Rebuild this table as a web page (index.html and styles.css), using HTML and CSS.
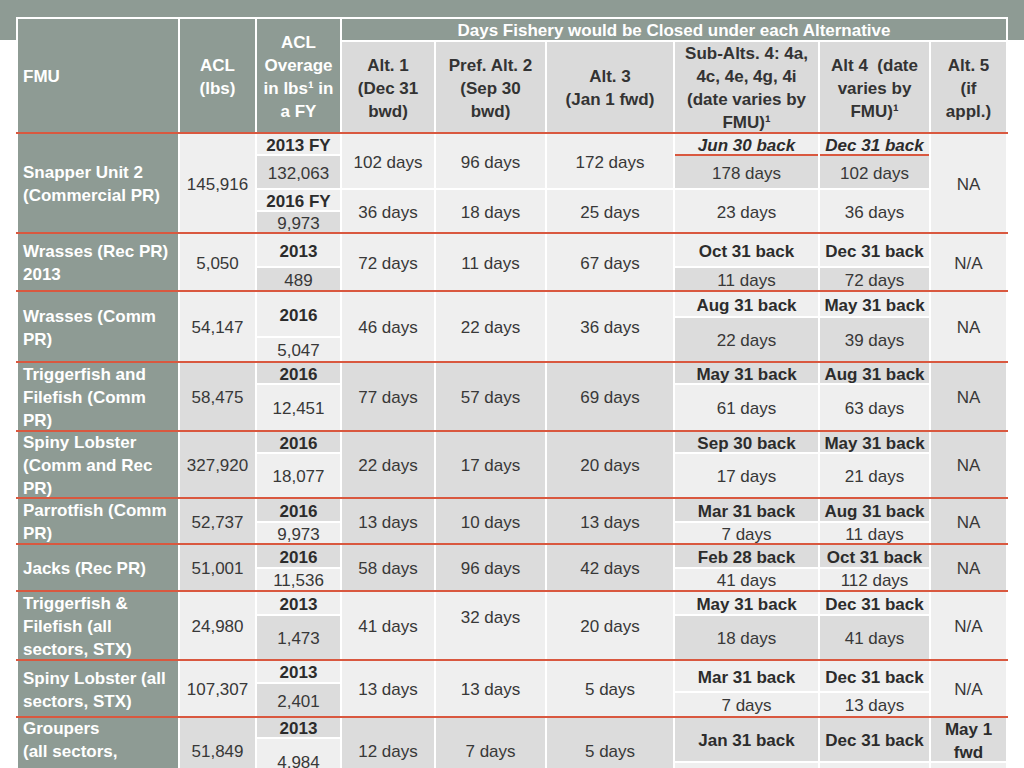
FILE: index.html
```html
<!DOCTYPE html>
<html>
<head>
<meta charset="utf-8">
<link rel="stylesheet" href="styles.css">
</head>
<body>
<div class="sheet">
  <div class="grid head">
    <div class="c hd fmu s2">FMU</div>
    <div class="c hd s2">ACL<br>(lbs)</div>
    <div class="c hd s2">ACL<br>Overage<br>in lbs¹ in<br>a FY</div>
    <div class="c hd days">Days Fishery would be Closed under each Alternative</div>
    <div class="c alt">Alt. 1<br>(Dec 31<br>bwd)</div>
    <div class="c alt">Pref. Alt. 2<br>(Sep 30<br>bwd)</div>
    <div class="c alt">Alt. 3<br>(Jan 1 fwd)</div>
    <div class="c alt">Sub-Alts. 4: 4a,<br>4c, 4e, 4g, 4i<br>(date varies by<br>FMU)¹</div>
    <div class="c alt">Alt 4&nbsp; (date<br>varies by<br>FMU)¹</div>
    <div class="c alt">Alt. 5<br>(if<br>appl.)</div>
  </div>

  <div class="grid row r-snapper">
    <div class="c fmu s4">Snapper Unit 2<br>(Commercial PR)</div>
    <div class="c L s4">145,916</div>
    <div class="c L b">2013 FY</div>
    <div class="c L s2">102 days</div>
    <div class="c L s2">96 days</div>
    <div class="c L s2">172 days</div>
    <div class="c L bi redline">Jun 30 back</div>
    <div class="c L bi redline">Dec 31 back</div>
    <div class="c L s4">NA</div>
    <div class="c D">132,063</div>
    <div class="c D">178 days</div>
    <div class="c D">102 days</div>
    <div class="c L b">2016 FY</div>
    <div class="c L s2">36 days</div>
    <div class="c L s2">18 days</div>
    <div class="c L s2">25 days</div>
    <div class="c L s2">23 days</div>
    <div class="c L s2">36 days</div>
    <div class="c D">9,973</div>
  </div>

  <div class="grid row r-wrec">
    <div class="c fmu s2">Wrasses (Rec PR)<br>2013</div>
    <div class="c L s2">5,050</div>
    <div class="c L b">2013</div>
    <div class="c L s2">72 days</div>
    <div class="c L s2">11 days</div>
    <div class="c L s2">67 days</div>
    <div class="c L b">Oct 31 back</div>
    <div class="c L b">Dec 31 back</div>
    <div class="c L s2">N/A</div>
    <div class="c D">489</div>
    <div class="c D">11 days</div>
    <div class="c D">72 days</div>
  </div>

  <div class="grid row r-wcomm">
    <div class="c fmu s3">Wrasses (Comm<br>PR)</div>
    <div class="c L s3">54,147</div>
    <div class="c L b s2">2016</div>
    <div class="c L s3">46 days</div>
    <div class="c L s3">22 days</div>
    <div class="c L s3">36 days</div>
    <div class="c L b">Aug 31 back</div>
    <div class="c L b">May 31 back</div>
    <div class="c L s3">NA</div>
    <div class="c D s2">22 days</div>
    <div class="c D s2">39 days</div>
    <div class="c L">5,047</div>
  </div>

  <div class="grid row r-tcomm">
    <div class="c fmu s2">Triggerfish and<br>Filefish (Comm<br>PR)</div>
    <div class="c D s2">58,475</div>
    <div class="c D b">2016</div>
    <div class="c D s2">77 days</div>
    <div class="c D s2">57 days</div>
    <div class="c D s2">69 days</div>
    <div class="c D b">May 31 back</div>
    <div class="c D b">Aug 31 back</div>
    <div class="c D s2">NA</div>
    <div class="c L">12,451</div>
    <div class="c L">61 days</div>
    <div class="c L">63 days</div>
  </div>

  <div class="grid row r-scomm">
    <div class="c fmu s2">Spiny Lobster<br>(Comm and Rec<br>PR)</div>
    <div class="c D s2">327,920</div>
    <div class="c D b">2016</div>
    <div class="c D s2">22 days</div>
    <div class="c D s2">17 days</div>
    <div class="c D s2">20 days</div>
    <div class="c D b">Sep 30 back</div>
    <div class="c D b">May 31 back</div>
    <div class="c D s2">NA</div>
    <div class="c L">18,077</div>
    <div class="c L">17 days</div>
    <div class="c L">21 days</div>
  </div>

  <div class="grid row r-parrot">
    <div class="c fmu s2">Parrotfish (Comm<br>PR)</div>
    <div class="c D s2">52,737</div>
    <div class="c D b">2016</div>
    <div class="c D s2">13 days</div>
    <div class="c D s2">10 days</div>
    <div class="c D s2">13 days</div>
    <div class="c D b">Mar 31 back</div>
    <div class="c D b">Aug 31 back</div>
    <div class="c D s2">NA</div>
    <div class="c L">9,973</div>
    <div class="c L">7 days</div>
    <div class="c L">11 days</div>
  </div>

  <div class="grid row r-jacks">
    <div class="c fmu s2">Jacks (Rec PR)</div>
    <div class="c D s2">51,001</div>
    <div class="c D b">2016</div>
    <div class="c D s2">58 days</div>
    <div class="c D s2">96 days</div>
    <div class="c D s2">42 days</div>
    <div class="c D b">Feb 28 back</div>
    <div class="c D b">Oct 31 back</div>
    <div class="c D s2">NA</div>
    <div class="c L">11,536</div>
    <div class="c L">41 days</div>
    <div class="c L">112 days</div>
  </div>

  <div class="grid row r-tstx">
    <div class="c fmu s2">Triggerfish &amp;<br>Filefish (all<br>sectors, STX)</div>
    <div class="c L s2">24,980</div>
    <div class="c L b">2013</div>
    <div class="c L s2">41 days</div>
    <div class="c L s2 up">32 days</div>
    <div class="c L s2">20 days</div>
    <div class="c L b">May 31 back</div>
    <div class="c L b">Dec 31 back</div>
    <div class="c L s2">N/A</div>
    <div class="c D">1,473</div>
    <div class="c D">18 days</div>
    <div class="c D">41 days</div>
  </div>

  <div class="grid row r-sstx">
    <div class="c fmu s3">Spiny Lobster (all<br>sectors, STX)</div>
    <div class="c L s3">107,307</div>
    <div class="c L b">2013</div>
    <div class="c L s3">13 days</div>
    <div class="c L s3">13 days</div>
    <div class="c L s3">5 days</div>
    <div class="c L b s2">Mar 31 back</div>
    <div class="c L b s2">Dec 31 back</div>
    <div class="c L s3">N/A</div>
    <div class="c D s2">2,401</div>
    <div class="c L">7 days</div>
    <div class="c L">13 days</div>
  </div>

  <div class="grid row r-grp">
    <div class="c fmu s3">Groupers<br>(all sectors,<br>STX)</div>
    <div class="c D s3">51,849</div>
    <div class="c D b">2013</div>
    <div class="c D s3">12 days</div>
    <div class="c D s3">7 days</div>
    <div class="c D s3">5 days</div>
    <div class="c D b s2">Jan 31 back</div>
    <div class="c D b s2">Dec 31 back</div>
    <div class="c D b s2">May 1<br>fwd</div>
    <div class="c L s2">4,984</div>
    <div class="c L"></div>
    <div class="c L"></div>
    <div class="c L"></div>
  </div>
</div>
</body>
</html>
```

FILE: styles.css
```css
html, body {
  margin: 0;
  padding: 0;
}

body {
  width: 1024px;
  height: 768px;
  overflow: hidden;
  background: linear-gradient(to bottom, #8e9b94 0, #8e9b94 40px, #ffffff 40px);
  font-family: "Liberation Sans", Arial, sans-serif;
  font-size: 17px;
  color: #383838;
}

.sheet {
  margin: 17px 0 0 16px;
  width: 992px;
}

.grid {
  display: grid;
  grid-template-columns: 160px 75px 83px 92px 109px 126px 143px 109px 75px;
  column-gap: 2px;
  row-gap: 2px;
  padding: 0 2px;
  background: #ffffff;
}

.head {
  border-top: 2px solid #ffffff;
  grid-template-rows: 21px 90px;
}

.row {
  border-top: 2px solid #d9583f;
}

.r-snapper { grid-template-rows: 20px 32px 20px 20px; }
.r-wrec    { grid-template-rows: 32px 22px; }
.r-wcomm   { grid-template-rows: 24px 18px 23px; }
.r-tcomm   { grid-template-rows: 20px 45px; }
.r-scomm   { grid-template-rows: 20px 43px; }
.r-parrot  { grid-template-rows: 22px 20px; }
.r-jacks   { grid-template-rows: 22px 21px; }
.r-tstx    { grid-template-rows: 22px 43px; }
.r-sstx    { grid-template-rows: 21px 7px 23px; }
.r-grp     { grid-template-rows: 19px 22px 20px; }

.c {
  display: flex;
  align-items: center;
  justify-content: center;
  text-align: center;
  white-space: nowrap;
  line-height: 23px;
  padding-top: 2px;
  box-sizing: border-box;
  min-width: 0;
  min-height: 0;
}

.s2 { grid-row: span 2; }
.s3 { grid-row: span 3; }
.s4 { grid-row: span 4; }

.hd {
  background: #8e9b94;
  color: #ffffff;
  font-weight: bold;
}

.days {
  grid-column: span 6;
}

.alt {
  background: #dadada;
  color: #333333;
  font-weight: bold;
}

.fmu {
  justify-content: flex-start;
  text-align: left;
  padding-left: 5px;
  background: #8e9b94;
  color: #ffffff;
  font-weight: bold;
}

.L { background: #efefef; }
.D { background: #dcdcdc; }

.b {
  font-weight: bold;
  color: #2c2c2c;
}

.bi {
  font-weight: bold;
  font-style: italic;
  color: #2c2c2c;
}

.redline {
  box-shadow: 0 2px 0 #d9583f;
}

.up {
  padding-bottom: 18px;
}
```
